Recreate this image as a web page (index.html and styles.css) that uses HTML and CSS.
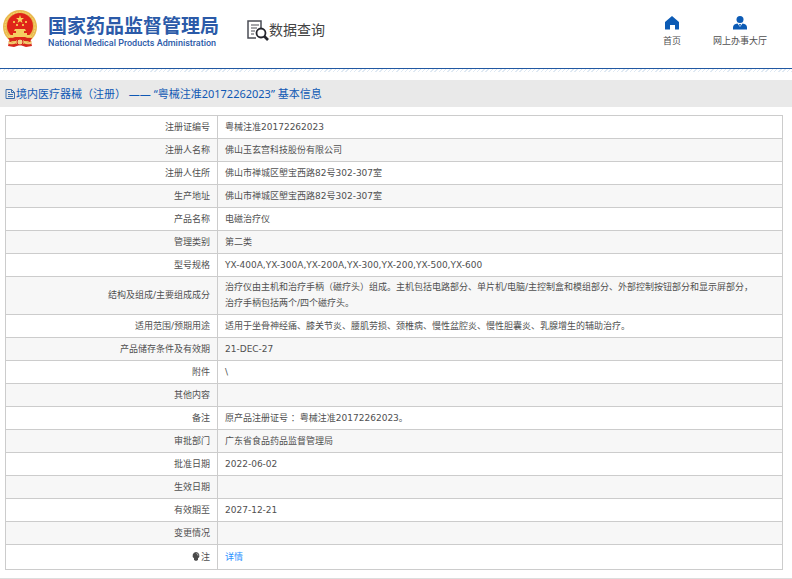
FILE: index.html
```html
<!DOCTYPE html>
<html lang="zh-CN">
<head>
<meta charset="utf-8">
<meta name="viewport" content="width=device-width, initial-scale=1">
<title>国家药品监督管理局 数据查询</title>
<link rel="stylesheet" href="styles.css">
</head>
<body>
<header class="header">
  <div class="brand">
    <svg class="emblem" viewBox="0 0 34 38" aria-hidden="true">
      <path d="M7 28h20l2 8-6 1-6-2-6 2-6-1z" fill="#d8271c"/>
      <circle cx="17" cy="17" r="17" fill="#e9b94e"/>
      <circle cx="17" cy="17" r="15" fill="none" stroke="#f6d878" stroke-width="1" stroke-dasharray="2 1"/>
      <circle cx="17" cy="16" r="13" fill="#df2419"/>
      <path d="M17 5l1 3h3l-2.400 2 .9 3-2.500-1.800-2.500 1.800.9-3-2.400-2h3z" fill="#f8d65c"/>
      <path d="M10 11h2v2h-2zM22 11h2v2h-2zM13 14h2v2h-2zM19 14h2v2h-2z" fill="#f3b94a"/>
      <path d="M12 19h10l1 2H11zM13 21h8v2h3v3H10v-3h3zM6 25h22v2H6z" fill="#f5cf62"/>
      <path d="M5 28h24l-2 3H7z" fill="#d8271c"/>
      <path d="M5 31q6 3 9-1h6q3 4 9 1l-1 3q-5 1-7-1-4 3-8 0-2 2-7 1z" fill="#f1cc70"/>
      <circle cx="17" cy="32" r="3" fill="#f4d486" stroke="#d8271c"/>
    </svg>
    <div class="brand-text">
      <div class="brand-name">国家药品监督管理局</div>
      <div class="brand-en">National Medical Products Administration</div>
    </div>
  </div>
  <div class="section-name">
    <svg class="search-icon" viewBox="0 0 22 22" fill="none" aria-hidden="true">
      <path d="M9 18H1V1h13v7" stroke="#4b4d55" stroke-width="1.500"/>
      <path d="M4 5h8M4 8h6M4 11h4M4 14h3" stroke="#4b4d55" stroke-width="1.200"/>
      <circle cx="14" cy="13" r="4.500" stroke="#25262d" stroke-width="1.800"/>
      <path d="M17 16l4 4" stroke="#25262d" stroke-width="2.600"/>
    </svg>
    <span>数据查询</span>
  </div>
  <nav class="nav">
    <a href="#">
      <svg viewBox="0 0 14 14" aria-hidden="true"><path d="M7 0l7 6v7q0 .5-.5.500H10V9H5v4.500H.5Q0 13.500 0 13V6z" fill="#0c5bb5"/></svg>
      首页
    </a>
    <a href="#">
      <svg viewBox="0 0 14 14" aria-hidden="true"><circle cx="7" cy="3.500" r="3.500" fill="#0c5bb5"/><path d="M0 13.500v-2Q0 8 4.500 7.500L7 11l2.500-3.500Q14 8 14 11.500v2z" fill="#0c5bb5"/><path d="M6 8h2l-1 3z" fill="#0c5bb5"/></svg>
      网上办事大厅
    </a>
  </nav>
</header>
<main>
  <h1 class="title">
    <svg class="doc-icon" viewBox="0 0 10 10" fill="none" stroke="#3d6fae" aria-hidden="true"><path d="M1 .5h5.500l3 3v6H1zM6.500.5v3h3M3 3.500h2M3 5.500h5M3 7.500h5"/></svg>
    <span>境内医疗器械（注册） —— “粤械注准20172262023” 基本信息</span>
  </h1>
  <table class="info">
    <tbody>
      <tr><th scope="row">注册证编号</th><td>粤械注准20172262023</td></tr>
      <tr><th scope="row">注册人名称</th><td>佛山玉玄宫科技股份有限公司</td></tr>
      <tr><th scope="row">注册人住所</th><td>佛山市禅城区塱宝西路82号302-307室</td></tr>
      <tr><th scope="row">生产地址</th><td>佛山市禅城区塱宝西路82号302-307室</td></tr>
      <tr><th scope="row">产品名称</th><td>电磁治疗仪</td></tr>
      <tr><th scope="row">管理类别</th><td>第二类</td></tr>
      <tr><th scope="row">型号规格</th><td>YX-400A,YX-300A,YX-200A,YX-300,YX-200,YX-500,YX-600</td></tr>
      <tr><th scope="row">结构及组成/主要组成成分</th><td>治疗仪由主机和治疗手柄（磁疗头）组成。主机包括电路部分、单片机/电脑/主控制盒和模组部分、外部控制按钮部分和显示屏部分，<br>治疗手柄包括两个/四个磁疗头。</td></tr>
      <tr><th scope="row">适用范围/预期用途</th><td>适用于坐骨神经痛、膝关节炎、腰肌劳损、颈椎病、慢性盆腔炎、慢性胆囊炎、乳腺增生的辅助治疗。</td></tr>
      <tr><th scope="row">产品储存条件及有效期</th><td>21-DEC-27</td></tr>
      <tr><th scope="row">附件</th><td>\</td></tr>
      <tr><th scope="row">其他内容</th><td></td></tr>
      <tr><th scope="row">备注</th><td>原产品注册证号 ：粤械注准20172262023。</td></tr>
      <tr><th scope="row">审批部门</th><td>广东省食品药品监督管理局</td></tr>
      <tr><th scope="row">批准日期</th><td>2022-06-02</td></tr>
      <tr><th scope="row">生效日期</th><td></td></tr>
      <tr><th scope="row">有效期至</th><td>2027-12-21</td></tr>
      <tr><th scope="row">变更情况</th><td></td></tr>
      <tr class="note"><th scope="row"><svg class="bulb" viewBox="0 0 8 9" aria-hidden="true"><path d="M4 0a3.500 3.500 0 0 1 2 6.300V8L4 9 2 8V6.300A3.500 3.500 0 0 1 4 0z" fill="#4a4a4a"/><path d="M4.500 1.500q1.500.3 1.500 2" fill="none" stroke="#bbb"/></svg>注</th><td><a href="#">详情</a></td></tr>
    </tbody>
  </table>
</main>
<footer class="footer"></footer>
</body>
</html>
```
FILE: styles.css
```css
* { box-sizing: border-box; }

body {
  margin: 0;
  background: #fff;
  color: #505050;
  font-family: "Noto Sans", "Noto Sans CJK SC", sans-serif;
  font-size: 9px;
  line-height: 16px;
}

a { color: inherit; text-decoration: none; }

.header {
  display: flex;
  align-items: flex-start;
  height: 68px;
  padding: 0 25px 0 3px;
}

.brand { display: flex; gap: 11px; padding-top: 10px; }
.emblem { width: 34px; height: 38px; }
.brand-text { padding-top: 4px; color: #2b5aa8; }
.brand-name {
  font-family: "Noto Sans CJK SC", sans-serif;
  font-size: 19px;
  font-weight: 700;
  line-height: 21px;
}
.brand-en {
  font-family: Roboto, "Liberation Sans", sans-serif;
  font-size: 9px;
  font-weight: 500;
  line-height: 16px;
}

.section-name {
  display: flex;
  margin-left: 28px;
  padding-top: 20px;
  color: #444;
  font-size: 14px;
  line-height: 20px;
}
.search-icon { width: 22px; height: 22px; }

.nav { display: flex; gap: 32px; margin-left: auto; padding-top: 16px; }
.nav a {
  display: flex;
  flex-direction: column;
  align-items: center;
  gap: 3px;
}
.nav svg { width: 14px; height: 14px; }

main {
  padding-top: 11px;
  border-top: 1px solid #2158a2;
  background: repeating-linear-gradient(135deg, #dfe9f3 0 1px, #fff 1px 3px) top / 100% 3px no-repeat;
}

.title {
  display: flex;
  align-items: center;
  margin: 0 0 8px;
  padding: 0 5px;
  background: #e9e9e9;
  color: #0f58b4;
  font-size: 11px;
  font-weight: 400;
  line-height: 27px;
}
.doc-icon { width: 10px; height: 10px; margin-right: 1px; }

.info {
  width: calc(100% - 14px);
  margin-left: 5px;
  border-collapse: collapse;
  table-layout: fixed;
  font-family: "DejaVu Sans", "Noto Sans CJK SC", sans-serif;
}
.info th,
.info td {
  height: 23px;
  padding: 2px 7px 3px;
  border: 1px solid #ccc;
  text-align: left;
}
.info th { width: 212px; font-weight: 400; text-align: right; }
.info tr:nth-child(even) { background: #f7f7f7; }
.info .note td,
.info .note th { height: 25px; }
.info td a { color: #2a90ff; }
.bulb { width: 8px; height: 9px; margin-right: 1px; vertical-align: -1px; }

.footer { margin-top: 8px; border-top: 1px solid #ddd; }
```
